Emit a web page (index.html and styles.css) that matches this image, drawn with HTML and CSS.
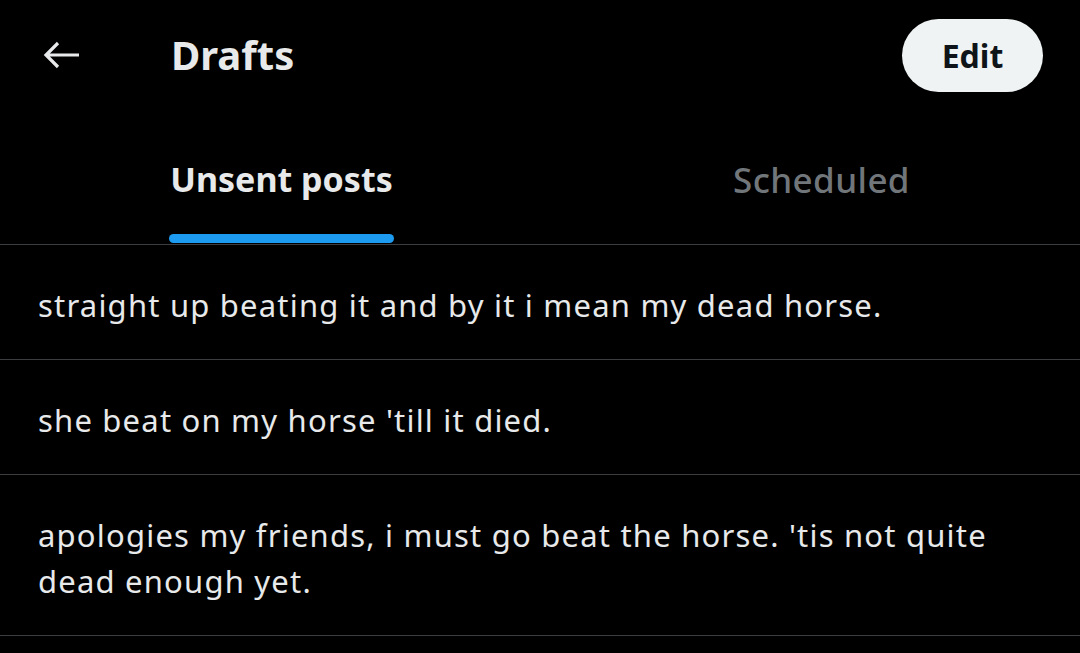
FILE: index.html
```html
<!DOCTYPE html>
<html>
<head>
<meta charset="utf-8">
<link rel="stylesheet" href="styles.css">
</head>
<body>
<div class="app">
  <header class="topbar">
    <div class="back">
      <svg width="40" height="40" viewBox="0 0 40 40"><path d="M37 20H5M16 8L4 20l12 12" fill="none" stroke="#e7e9ea" stroke-width="3.2" stroke-linecap="butt" stroke-linejoin="miter"/></svg>
    </div>
    <h1 class="title">Drafts</h1>
    <button class="edit">Edit</button>
  </header>
  <nav class="tabs">
    <div class="tab active"><span class="tab-label">Unsent posts<span class="indicator"></span></span></div>
    <div class="tab"><span class="tab-label">Scheduled</span></div>
  </nav>
  <ul class="list">
    <li class="item">straight up beating it and by it i mean my dead horse.</li>
    <li class="item">she beat on my horse 'till it died.</li>
    <li class="item">apologies my friends, i must go beat the horse. 'tis not quite dead enough yet.</li>
  </ul>
</div>
</body>
</html>
```
FILE: styles.css
```css
* { box-sizing: border-box; }
html, body { margin: 0; padding: 0; background: #000; }
body {
  font-family: "Noto Sans", "Open Sans", sans-serif;
  color: #e7e9ea;
  width: 1080px;
  height: 653px;
  overflow: hidden;
}
.topbar {
  height: 112px;
  display: flex;
  align-items: center;
  padding: 0 37px 0 42px;
}
.back {
  width: 40px;
  height: 40px;
  display: flex;
  margin-top: -2px;
}
.title {
  margin: 0 0 0 89px;
  font-size: 40px;
  font-weight: 700;
  flex: 1;
  margin-top: -4px;
}
.edit {
  width: 141px;
  height: 73px;
  border: none;
  border-radius: 37px;
  background: #eff3f4;
  color: #0f1419;
  font-family: inherit;
  font-size: 32px;
  font-weight: 700;
  padding: 0;
  margin-top: -1px;
}
.tabs {
  display: flex;
  height: 133px;
  border-bottom: 1px solid #3b3e41;
}
.tab {
  flex: 1;
  display: flex;
  justify-content: center;
  font-size: 35px;
  font-weight: 500;
  letter-spacing: 0.4px;
  color: #71767b;
}
.tab-label {
  position: relative;
  height: 100%;
  padding-top: 44px;
  margin-left: 23px;
}
.tab.active { color: #e7e9ea; font-weight: 700; font-size: 34px; letter-spacing: 0; }
.indicator {
  position: absolute;
  left: -1px;
  right: -1px;
  bottom: 1px;
  height: 9px;
  border-radius: 5px;
  background: #1d9bf0;
}
.list { list-style: none; margin: 0; padding: 0; }
.item {
  padding: 37px 38px 31px 38px;
  font-size: 31px;
  line-height: 46px;
  letter-spacing: 1.2px;
  border-bottom: 1px solid #3b3e41;
}
```
